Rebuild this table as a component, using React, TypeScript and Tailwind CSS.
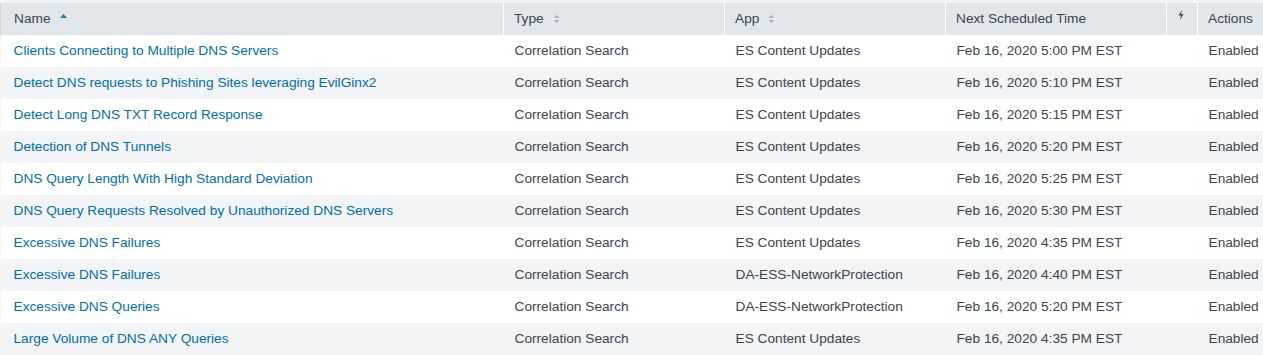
import React from "react";

type Row = {
  name: string;
  app: string;
  time: string;
};

const rows: Row[] = [
  { name: "Clients Connecting to Multiple DNS Servers", app: "ES Content Updates", time: "Feb 16, 2020 5:00 PM EST" },
  { name: "Detect DNS requests to Phishing Sites leveraging EvilGinx2", app: "ES Content Updates", time: "Feb 16, 2020 5:10 PM EST" },
  { name: "Detect Long DNS TXT Record Response", app: "ES Content Updates", time: "Feb 16, 2020 5:15 PM EST" },
  { name: "Detection of DNS Tunnels", app: "ES Content Updates", time: "Feb 16, 2020 5:20 PM EST" },
  { name: "DNS Query Length With High Standard Deviation", app: "ES Content Updates", time: "Feb 16, 2020 5:25 PM EST" },
  { name: "DNS Query Requests Resolved by Unauthorized DNS Servers", app: "ES Content Updates", time: "Feb 16, 2020 5:30 PM EST" },
  { name: "Excessive DNS Failures", app: "ES Content Updates", time: "Feb 16, 2020 4:35 PM EST" },
  { name: "Excessive DNS Failures", app: "DA-ESS-NetworkProtection", time: "Feb 16, 2020 4:40 PM EST" },
  { name: "Excessive DNS Queries", app: "DA-ESS-NetworkProtection", time: "Feb 16, 2020 5:20 PM EST" },
  { name: "Large Volume of DNS ANY Queries", app: "ES Content Updates", time: "Feb 16, 2020 4:35 PM EST" },
];

// mũi tên sắp xếp (đang chọn)
const SortUp = () => (
  <svg width="7" height="4" viewBox="0 0 7 4" className="ml-[9px] mb-[5px]">
    <path d="M0 4 L3.5 0 L7 4 Z" fill="#1a7bbf" />
  </svg>
);

const SortBoth = () => (
  <svg width="7" height="10" viewBox="0 0 7 10" className="ml-[9px]">
    <path d="M0.5 4 L3.5 1 L6.5 4 Z" fill="#a8b0b8" />
    <path d="M0.5 6 L3.5 9 L6.5 6 Z" fill="#a8b0b8" />
  </svg>
);

const Bolt = () => (
  <svg width="6" height="10" viewBox="0 0 6 10">
    <path d="M4 0 L0.5 5.5 L3 5.5 L2 10 L5.5 4.2 L3 4.2 Z" fill="#3c444d" />
  </svg>
);

const App: React.FC = () => {
  return (
    <div
      className="w-[1263px] h-[355px] pt-[3px] bg-[#f2f4f5] overflow-hidden"
      style={{ fontFamily: '"Liberation Sans", Arial, sans-serif' }}
    >
      <table className="w-full table-fixed border-collapse text-[13.7px] text-[#3c444d]">
        <colgroup>
          <col className="w-[503px]" />
          <col className="w-[221px]" />
          <col className="w-[221px]" />
          <col className="w-[221px]" />
          <col className="w-[31px]" />
          <col />
        </colgroup>
        <thead>
          <tr className="h-[32px] bg-[#e1e6eb] text-left">
            <th className="font-normal pl-[13px] border-l border-[#cfd5db]">
              <span className="inline-flex items-center">
                Name
                <SortUp />
              </span>
            </th>
            <th className="font-normal pl-[10px] border-l border-white">
              <span className="inline-flex items-center">
                Type
                <SortBoth />
              </span>
            </th>
            <th className="font-normal pl-[10px] border-l border-white">
              <span className="inline-flex items-center">
                App
                <SortBoth />
              </span>
            </th>
            <th className="font-normal pl-[10px] border-l border-white">Next Scheduled Time</th>
            <th className="font-normal border-l border-white align-top pt-[7px] pl-[11px]">
              <Bolt />
            </th>
            <th className="font-normal pl-[10px] border-l border-white">Actions</th>
          </tr>
        </thead>
        <tbody>
          {rows.map((row, i) => (
            <tr key={i} className={`h-[32px] ${i % 2 === 0 ? "bg-white" : "bg-[#f2f4f5]"}`}>
              <td className="pl-[13px] text-[#006eaa] whitespace-nowrap">{row.name}</td>
              <td className="pl-[11px] whitespace-nowrap">Correlation Search</td>
              <td className="pl-[11px] whitespace-nowrap">{row.app}</td>
              <td className="pl-[11px] whitespace-nowrap">{row.time}</td>
              <td></td>
              <td className="pl-[11px] whitespace-nowrap">Enabled</td>
            </tr>
          ))}
        </tbody>
      </table>
    </div>
  );
};

export default App;
